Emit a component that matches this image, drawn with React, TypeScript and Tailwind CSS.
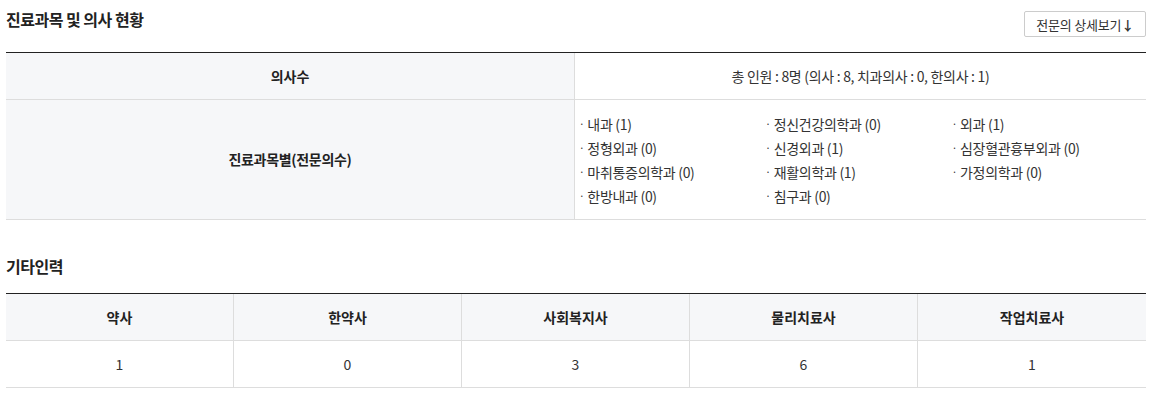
const departments = [
  '내과 (1)',
  '정신건강의학과 (0)',
  '외과 (1)',
  '정형외과 (0)',
  '신경외과 (1)',
  '심장혈관흉부외과 (0)',
  '마취통증의학과 (0)',
  '재활의학과 (1)',
  '가정의학과 (0)',
  '한방내과 (0)',
  '침구과 (0)',
];

const staff = [
  { label: '약사', count: 1 },
  { label: '한약사', count: 0 },
  { label: '사회복지사', count: 3 },
  { label: '물리치료사', count: 6 },
  { label: '작업치료사', count: 1 },
];

export default function App() {
  return (
    <div
      className="w-[1152px] h-[415px] bg-white px-[6px] pt-[7px] text-[#333] overflow-hidden"
      style={{ fontFamily: '"Noto Sans CJK KR", "Noto Sans", sans-serif' }}
    >
      {/* 진료과목 및 의사 현황 */}
      <div className="flex items-start justify-between">
        <h2 className="text-[16px] font-bold text-[#222] tracking-[-0.5px] leading-[24px]">진료과목 및 의사 현황</h2>
        <button className="mt-[4px] h-[26px] px-[11px] border border-[#ccc] rounded-[2px] bg-white text-[13px] text-[#333] tracking-[-0.2px] leading-none">
          전문의 상세보기<span className="font-bold">↓</span>
        </button>
      </div>

      <div className="mt-[15px] border-t border-[#222]">
        <div className="flex border-b border-[#ddd] h-[47px]">
          <div className="w-[569px] shrink-0 bg-[#f6f7f9] border-r border-[#ddd] flex items-center justify-center text-[14px] font-bold text-[#222]">
            의사수
          </div>
          <div className="flex-1 flex items-center justify-center text-[14px] tracking-[-0.3px]">
            총 인원 : 8명 (의사 : 8, 치과의사 : 0, 한의사 : 1)
          </div>
        </div>
        <div className="flex border-b border-[#ddd] h-[120px]">
          <div className="w-[569px] shrink-0 bg-[#f6f7f9] border-r border-[#ddd] flex items-center justify-center text-[14px] font-bold text-[#222] tracking-[-0.3px]">
            진료과목별(전문의수)
          </div>
          <ul className="flex-1 grid grid-cols-3 content-center pl-[4px] pr-[8px] text-[14px] tracking-[-0.3px] leading-[24px]">
            {departments.map((d) => (
              <li key={d} className="flex items-center">
                <span className="mr-[3px] text-[10px]">·</span>
                {d}
              </li>
            ))}
          </ul>
        </div>
      </div>

      {/* 기타인력 */}
      <h2 className="mt-[34px] text-[16px] font-bold text-[#222] tracking-[-0.5px] leading-[24px]">기타인력</h2>
      <div className="mt-[15px] border-t border-[#222] grid grid-cols-5">
        {staff.map((s, i) => (
          <div
            key={s.label}
            className={`h-[47px] bg-[#f6f7f9] border-b border-[#ddd] flex items-center justify-center text-[14px] font-bold text-[#222] ${i < 4 ? 'border-r' : ''}`}
          >
            {s.label}
          </div>
        ))}
        {staff.map((s, i) => (
          <div
            key={s.label + '-v'}
            className={`h-[47px] border-b border-[#ddd] flex items-center justify-center text-[14px] ${i < 4 ? 'border-r' : ''}`}
          >
            {s.count}
          </div>
        ))}
      </div>
    </div>
  );
}
